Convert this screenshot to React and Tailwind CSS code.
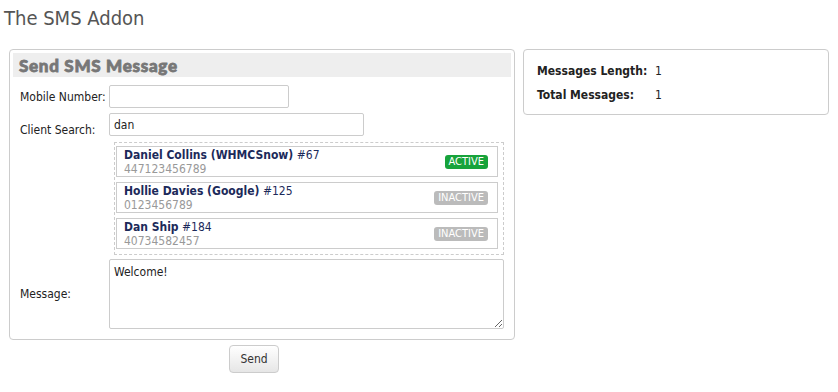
import React from 'react'

const clients = [
  { name: 'Daniel Collins (WHMCSnow)', id: '#67', phone: '447123456789', active: true },
  { name: 'Hollie Davies (Google)', id: '#125', phone: '0123456789', active: false },
  { name: 'Dan Ship', id: '#184', phone: '40734582457', active: false },
]

const App = () => {
  return (
    <div className="w-[838px] h-[392px] bg-white text-[12px] text-[#222] font-['DejaVu_Sans_Condensed','DejaVu_Sans',sans-serif] overflow-hidden">
      <h1 className="pl-[4px] pt-[6px] h-[49px] text-[20px] leading-[24px] text-[#555]">
        The SMS Addon
      </h1>

      <div className="flex items-start gap-[8px] pl-[9px]">
        {/* Send form */}
        <div className="w-[506px]">
          <div className="border border-[#ccc] rounded-[4px] p-[3px] pb-[10px]">
            <div className="h-[24px] bg-[#eeeeee] pl-[6px] text-[17px] leading-[26px] font-black text-[#777] font-['Lato','Open_Sans',sans-serif] tracking-[0.7px] [-webkit-text-stroke:0.8px_#777]">
              Send SMS Message
            </div>

            <div className="flex items-center mt-[8px]">
              <label className="w-[96px] pl-[7px]">Mobile Number:</label>
              <input className="w-[180px] h-[23px] border border-[#ccc] rounded-[2px] px-[4px] outline-none" />
            </div>

            <div className="flex items-start mt-[5px]">
              <label className="w-[96px] pl-[7px] pt-[8px]">Client Search:</label>
              <input defaultValue="dan" className="w-[255px] h-[23px] border border-[#ccc] rounded-[2px] px-[4px] outline-none text-[12px]" />
            </div>

            <div className="ml-[101px] mr-[7px] mt-[3px] border border-dashed border-[#ccc] pl-[1px] pr-[5px] pt-[3px] pb-[5px] flex flex-col gap-[5px]">
              {clients.map((c) => (
                <div key={c.id} className="h-[31px] border border-[#ccc] flex items-center justify-between pl-[7px] pr-[9px]">
                  <div className="leading-[14px]">
                    <div>
                      <span className="font-bold text-[#1c2a5a]">{c.name}</span>{' '}
                      <span className="text-[#1c2a5a]">{c.id}</span>
                    </div>
                    <div className="text-[#999]">{c.phone}</div>
                  </div>
                  <span
                    className={
                      c.active
                        ? 'bg-[#17a33b] text-white text-[11px] leading-[14px] px-[4px] rounded-[3px]'
                        : 'bg-[#bbbbbb] text-white text-[11px] leading-[14px] px-[4px] rounded-[3px]'
                    }
                  >
                    {c.active ? 'ACTIVE' : 'INACTIVE'}
                  </span>
                </div>
              ))}
            </div>

            <div className="flex items-center mt-[4px]">
              <label className="w-[96px] pl-[7px]">Message:</label>
              <textarea
                defaultValue="Welcome!"
                className="w-[395px] h-[70px] border border-[#ccc] rounded-[2px] px-[4px] py-[3px] outline-none text-[12px]"
              />
            </div>
          </div>

          <div className="flex pl-[220px] mt-[5px]">
            <button className="w-[50px] h-[28px] border border-[#ccc] rounded-[4px] bg-gradient-to-b from-white to-[#e6e6e6] text-[12px] text-[#333]">
              Send
            </button>
          </div>
        </div>

        {/* Stats */}
        <div className="w-[306px] h-[66px] border border-[#ccc] rounded-[4px] px-[13px] pt-[14px]">
          <div className="flex leading-[14px]">
            <span className="w-[118px] font-bold">Messages Length:</span>
            <span>1</span>
          </div>
          <div className="flex leading-[14px] mt-[10px]">
            <span className="w-[118px] font-bold">Total Messages:</span>
            <span>1</span>
          </div>
        </div>
      </div>
    </div>
  )
}

export default App
